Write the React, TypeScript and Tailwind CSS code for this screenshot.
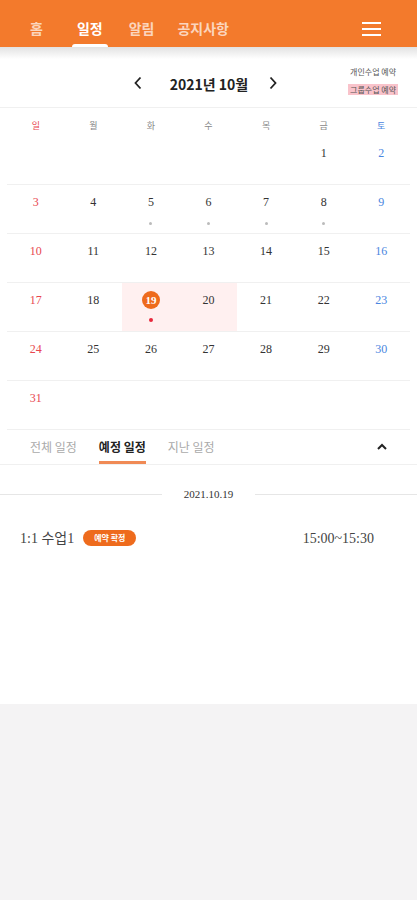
import React from 'react';

const weeks: (number | null)[][] = [
    [null, null, null, null, null, 1, 2],
    [3, 4, 5, 6, 7, 8, 9],
    [10, 11, 12, 13, 14, 15, 16],
    [17, 18, 19, 20, 21, 22, 23],
    [24, 25, 26, 27, 28, 29, 30],
    [31, null, null, null, null, null, null],
];

const weekdays = ['일', '월', '화', '수', '목', '금', '토'];
const grayDots = [5, 6, 7, 8];

const App: React.FC = () => {
    const dayColor = (col: number) =>
        col === 0 ? 'text-[#e8474f]' : col === 6 ? 'text-[#4a86e0]' : 'text-[#333]';

    return (
        <div className="min-h-[900px] bg-[#f4f3f4] font-['Noto_Sans_CJK_KR','Noto_Sans',sans-serif]">
            <div className="bg-white">
                {/* Top nav */}
                <div className="h-[47px] bg-[#f37a2c] flex items-stretch pt-[10px] pl-[30px] pr-[36px]">
                    <nav className="flex text-[14px] font-bold">
                        <a className="flex items-center text-white/70">홈</a>
                        <a className="relative flex items-center text-white ml-[34px]">
                            일정
                            <span className="absolute -left-[5px] -right-[5px] bottom-0 h-[3px] bg-white rounded-t"></span>
                        </a>
                        <a className="flex items-center text-white/70 ml-[26px]">알림</a>
                        <a className="flex items-center text-white/70 ml-[23px]">공지사항</a>
                    </nav>
                    <div className="ml-auto flex flex-col justify-center gap-[4px]">
                        <span className="block w-[19px] h-[2px] bg-white"></span>
                        <span className="block w-[19px] h-[2px] bg-white"></span>
                        <span className="block w-[19px] h-[2px] bg-white"></span>
                    </div>
                </div>
                <div className="h-[12px] bg-gradient-to-b from-[#e2e2e2] to-white"></div>

                {/* Month bar */}
                <div className="relative h-[49px] flex items-center justify-center pr-[6px] border-b border-[#f0f0f0]">
                    <svg width="10" height="14" viewBox="0 0 10 14" className="mb-[1px]">
                        <path d="M7.5 1.5 2.5 7l5 5.5" fill="none" stroke="#222" strokeWidth="1.8" />
                    </svg>
                    <span className="ml-[27px] mr-[20px] mt-[2px] text-[14px] font-bold text-[#222]">2021년 10월</span>
                    <svg width="10" height="14" viewBox="0 0 10 14" className="mb-[1px]">
                        <path d="M2.5 1.5 7.5 7l-5 5.5" fill="none" stroke="#222" strokeWidth="1.8" />
                    </svg>
                    <div className="absolute right-[19px] top-[7px] flex flex-col items-end gap-[7px] text-[8px] text-[#555] leading-[11px]">
                        <span className="px-[2px]">개인수업 예약</span>
                        <span className="px-[2px] bg-[#f9c3cb]">그룹수업 예약</span>
                    </div>
                </div>

                {/* Calendar */}
                <div className="px-[7px]">
                    <div className="grid grid-cols-7 h-[28px] pt-[13px] text-[9px] leading-[10px]">
                        {weekdays.map((w, i) => (
                            <div key={w} className={`text-center ${i === 0 ? 'text-[#e8474f]' : i === 6 ? 'text-[#4a86e0]' : 'text-[#888]'}`}>
                                {w}
                            </div>
                        ))}
                    </div>
                    {weeks.map((week, wi) => (
                        <div key={wi} className="grid grid-cols-7 h-[49px] border-b border-[#f0f0f0]">
                            {week.map((d, ci) => {
                                const hl = d === 19 || d === 20;
                                return (
                                    <div key={ci} className={`flex flex-col items-center pt-[8px] ${hl ? 'bg-[#fff0f0]' : ''}`}>
                                        {d === 19 ? (
                                            <span className="w-[18px] h-[18px] rounded-full bg-[#ee6b1d] text-white text-[11px] font-bold flex items-center justify-center font-['Liberation_Serif',serif]">
                                                19
                                            </span>
                                        ) : (
                                            d && (
                                                <span className={`h-[18px] flex items-center text-[12px] font-['Liberation_Serif',serif] ${dayColor(ci)}`}>
                                                    {d}
                                                </span>
                                            )
                                        )}
                                        {d && grayDots.includes(d) && <span className="mt-[11px] w-[3px] h-[3px] rounded-full bg-[#bbb]"></span>}
                                        {d === 19 && <span className="mt-[9px] w-[4px] h-[4px] rounded-full bg-[#e8283c]"></span>}
                                    </div>
                                );
                            })}
                        </div>
                    ))}
                </div>

                {/* Tabs */}
                <div className="h-[35px] flex items-stretch border-b border-[#f0f0f0] pl-[30px] pr-[29px] text-[12px]">
                    <div className="flex gap-[22px]">
                        <span className="flex items-center text-[#aaa]">전체 일정</span>
                        <span className="relative flex items-center font-bold text-[#222]">
                            예정 일정
                            <span className="absolute left-0 right-0 bottom-0 h-[3px] bg-[#f08a55]"></span>
                        </span>
                        <span className="flex items-center text-[#aaa]">지난 일정</span>
                    </div>
                    <svg width="12" height="10" viewBox="0 0 12 10" className="ml-auto self-center">
                        <path d="M2 7 6 3l4 4" fill="none" stroke="#222" strokeWidth="2" />
                    </svg>
                </div>

                {/* Schedule list */}
                <div className="h-[239px]">
                    <div className="flex items-center pt-[21px]">
                        <div className="flex-1 h-px bg-[#e6e6e6]"></div>
                        <span className="px-[22px] text-[11px] text-[#333] font-['Liberation_Serif',serif]">2021.10.19</span>
                        <div className="flex-1 h-px bg-[#e6e6e6]"></div>
                    </div>
                    <div className="flex items-center pl-[20px] pr-[43px] mt-[25px]">
                        <span className="text-[14px] text-[#444] font-['Liberation_Serif','Noto_Sans_CJK_KR',serif]">1:1 수업1</span>
                        <span className="ml-[9px] px-[11px] h-[16px] rounded-full bg-[#ee6b1d] text-white text-[8px] font-bold flex items-center">예약 확정</span>
                        <span className="ml-auto text-[14px] text-[#444] font-['Liberation_Serif',serif]">15:00~15:30</span>
                    </div>
                </div>
            </div>
        </div>
    );
};

export default App;
